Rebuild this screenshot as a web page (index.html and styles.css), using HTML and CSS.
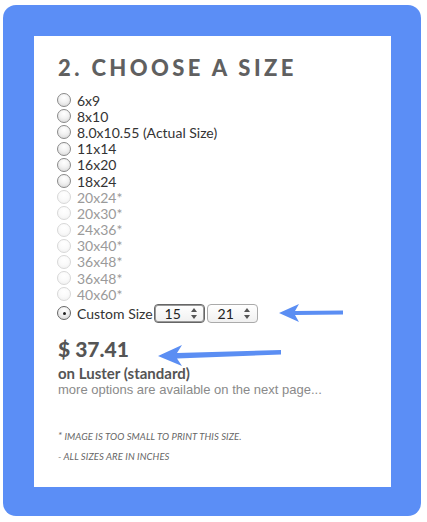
FILE: index.html
```html
<!DOCTYPE html>
<html>
<head>
<meta charset="utf-8">
<link rel="stylesheet" href="styles.css">
</head>
<body>
<div class="frame">
  <div class="panel">
    <h2 class="title">2. CHOOSE A SIZE</h2>
    <ul class="sizes">
      <li><span class="radio"></span>6x9</li>
      <li><span class="radio"></span>8x10</li>
      <li><span class="radio"></span>8.0x10.55 (Actual Size)</li>
      <li><span class="radio"></span>11x14</li>
      <li><span class="radio"></span>16x20</li>
      <li><span class="radio"></span>18x24</li>
      <li class="off"><span class="radio"></span>20x24*</li>
      <li class="off"><span class="radio"></span>20x30*</li>
      <li class="off"><span class="radio"></span>24x36*</li>
      <li class="off"><span class="radio"></span>30x40*</li>
      <li class="off"><span class="radio"></span>36x48*</li>
      <li class="off"><span class="radio"></span>36x48*</li>
      <li class="off"><span class="radio"></span>40x60*</li>
      <li class="custom"><span class="radio checked"></span>Custom Size<span class="sel focus">15<svg class="spin" width="6" height="11" viewBox="0 0 6 11"><path d="M3 0 L6 4 L0 4 Z M0 7 L6 7 L3 11 Z" fill="#555"/></svg></span><span class="sel">21<svg class="spin" width="6" height="11" viewBox="0 0 6 11"><path d="M3 0 L6 4 L0 4 Z M0 7 L6 7 L3 11 Z" fill="#555"/></svg></span></li>
    </ul>
    <div class="price">$ 37.41</div>
    <div class="paper">on Luster (standard)</div>
    <div class="more">more options are available on the next page...</div>
    <div class="notes">
      <p><span class="ast">*</span> IMAGE IS TOO SMALL TO PRINT THIS SIZE.</p>
      <p>- ALL SIZES ARE IN INCHES</p>
    </div>
    <svg class="arrow a1" width="70" height="20" viewBox="0 0 70 20">
      <path d="M2 10 L22 1 L18 8 L66 7.5 L66 11.5 L18 12 L22 19 Z" fill="#5b8ef3"/>
    </svg>
    <svg class="arrow a2" width="128" height="24" viewBox="0 0 128 24">
      <path d="M2 13 L26 2 L21 10 L125 7 L125 11.5 L21 15.5 L26 23 Z" fill="#5b8ef3"/>
    </svg>
  </div>
</div>
</body>
</html>
```
FILE: styles.css
```css
html, body {
  margin: 0;
  padding: 0;
  background: #fff;
}
body {
  width: 427px;
  height: 522px;
  padding: 5px 6px 6px 3px;
  box-sizing: border-box;
  font-family: Lato, "Open Sans", sans-serif;
}
.frame {
  background: #5b8ef6;
  border-radius: 13px;
  height: 511px;
  padding: 31px 30px 29px 31px;
  box-sizing: border-box;
}
.panel {
  position: relative;
  background: #fff;
  height: 451px;
  padding: 19px 20px 0 24px;
  box-sizing: border-box;
}
.title {
  margin: 0;
  font-family: Lato, sans-serif;
  font-weight: 900;
  font-size: 22px;
  letter-spacing: 3.4px;
  line-height: 26px;
  color: #606060;
}
.sizes {
  list-style: none;
  margin: 11px 0 0 0;
  padding: 0;
}
.sizes li {
  display: flex;
  align-items: center;
  height: 16.2px;
  font-size: 14px;
  color: #333;
}
.sizes li.off {
  color: #9a9a9a;
}
.radio {
  width: 14px;
  height: 14px;
  border-radius: 50%;
  border: 1px solid #8a8a8a;
  background: radial-gradient(circle at 50% 30%, #fff 0%, #f2f2f2 45%, #d4d4d4 100%);
  margin: 0 6px 0 -1px;
  box-sizing: border-box;
  flex: none;
  position: relative;
}
.off .radio {
  border-color: #d8d8d8;
  background: radial-gradient(circle at 50% 30%, #fff 0%, #fafafa 50%, #eee 100%);
}
.radio.checked {
  border-color: #666;
  background: radial-gradient(circle at 50% 30%, #fff 0%, #eee 50%, #ccc 100%);
}
.radio.checked::after {
  content: "";
  position: absolute;
  left: 4.5px;
  top: 4.5px;
  width: 3px;
  height: 3px;
  border-radius: 50%;
  background: #222;
}
.sizes li.custom {
  height: 20px;
  margin-top: 1px;
}
.sel {
  display: inline-flex;
  align-items: center;
  justify-content: space-between;
  box-sizing: border-box;
  width: 51px;
  height: 19px;
  margin-left: 2px;
  padding: 0 7px 0 10px;
  border: 1px solid #aaa;
  border-radius: 4px;
  background: linear-gradient(#fff, #f0f0f0);
  font-size: 14px;
  color: #222;
}
.sel.focus {
  border: 1px solid #666;
  box-shadow: 0 0 0 1px #999 inset;
  margin-left: 1px;
}
.spin {
  display: block;
}
.price {
  margin-top: 14px;
  font-size: 21px;
  font-weight: 900;
  color: #555;
  line-height: 24px;
}
.paper {
  margin-top: 4px;
  font-size: 15px;
  font-weight: 700;
  color: #555;
  line-height: 17px;
}
.more {
  font-family: "Liberation Sans", Arial, sans-serif;
  font-size: 13px;
  color: #8a8a8a;
  line-height: 16px;
}
.notes {
  margin-top: 30px;
}
.notes p {
  margin: 0 0 6px 0;
  font-size: 9.5px;
  font-style: italic;
  color: #666;
  line-height: 14px;
  letter-spacing: 0.1px;
}
.ast {
  font-size: 10px;
  vertical-align: 1px;
}
.arrow {
  position: absolute;
}
.a1 {
  left: 243px;
  top: 267px;
}
.a2 {
  left: 122px;
  top: 307px;
}
```
